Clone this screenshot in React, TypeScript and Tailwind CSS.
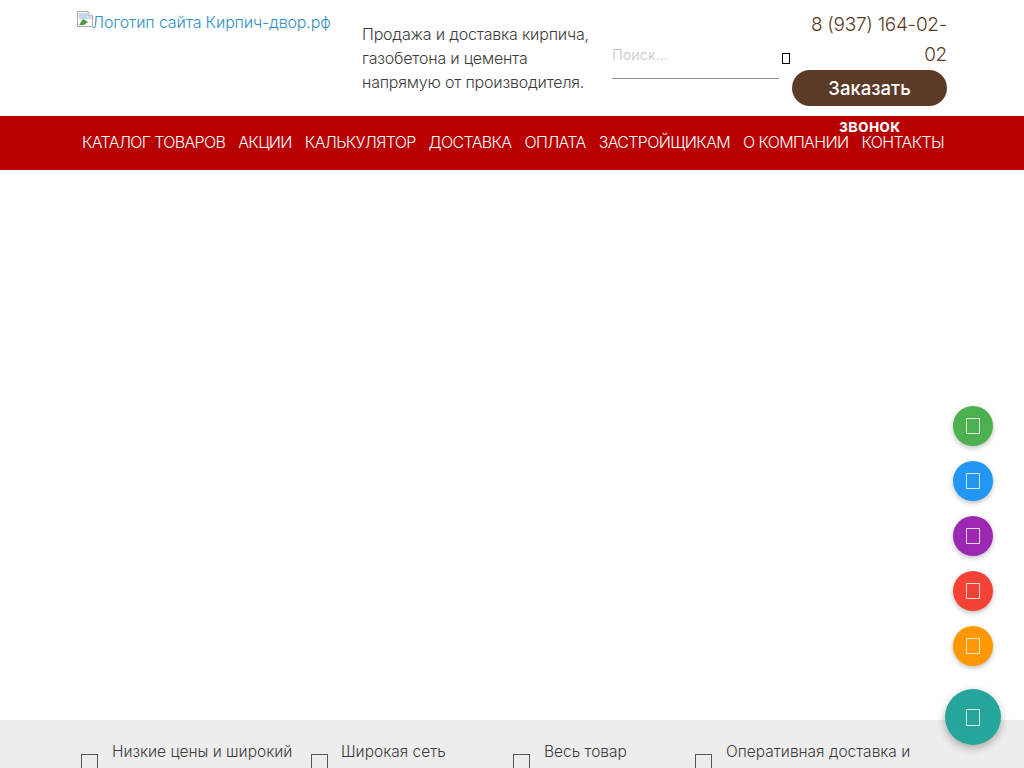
const navItems = ["Каталог товаров", "Акции", "Калькулятор", "Доставка", "Оплата", "Застройщикам", "О компании", "Контакты"];

const benefits = [
  { text: "Низкие цены и широкий", icon: "w-[31px]", col: "w-[230px]" },
  { text: "Широкая сеть", icon: "w-[30px]", col: "w-[202px]" },
  { text: "Весь товар", icon: "w-[31px]", col: "w-[182px]" },
  { text: "Оперативная доставка и", icon: "w-[31px]", col: "w-[220px]" },
];

const fabs = ["bg-[#4caf50]", "bg-[#2196f3]", "bg-[#9c27b0]", "bg-[#f44336]", "bg-[#ff9800]"];

function Tofu({ className }: { className: string }) {
  return <span className={"block border border-current " + className} />;
}

function BrokenImage() {
  return (
    <svg width="16" height="16" viewBox="0 0 16 16" className="shrink-0">
      <path d="M0.5 0.5h10.5l4.5 4.5v10.5H0.5z" fill="#fff" stroke="#a9a9a9" />
      <path d="M11 0.5v4.5h4.5" fill="#eaeaea" stroke="#a9a9a9" />
      <path d="M2 2h8v4l5 1v1H2z" fill="#c3d5f5" />
      <path d="M2 14l4-6 5 3-4 3z" fill="#4f9a3c" />
      <path d="M9 15l6-6" stroke="#fff" strokeWidth="2" />
    </svg>
  );
}

export default function App() {
  return (
    <div className="relative h-[768px] overflow-hidden bg-white font-['Inter','Noto_Sans',sans-serif] text-[#3c3c3c]">
      {/* Header */}
      <header className="flex h-[116px] pl-[77px]">
        <a className="mt-[11px] flex h-[16px] w-[285px] items-start text-[16px] font-light leading-[22px] tracking-[-0.15px] text-[#2f8fc6]">
          <BrokenImage />
          <span className="-ml-[1px] whitespace-nowrap">Логотип сайта Кирпич-двор.рф</span>
        </a>
        <p className="w-[250px] pt-[22px] text-[16px] font-light leading-[24px] tracking-[-0.2px] whitespace-pre-line">
          {"Продажа и доставка кирпича,\nгазобетона и цемента\nнапрямую от производителя."}
        </p>
        <div className="relative w-[180px] pt-[43px]">
          <div className="h-[36px] w-[167px] border-b border-[#8f8f8f] text-[14.5px] font-light leading-[24px] text-[#c4c4c4]">Поиск...</div>
          <Tofu className="absolute left-[170px] top-[53px] h-[11px] w-[8px] text-black" />
        </div>
        <div className="relative z-10 w-[155px] pt-[10px]">
          <div className="text-right text-[19px] font-light leading-[30px] tracking-[-0.3px] text-[#5c3a28]">
            8 (937) 164-02-<br />02
          </div>
          <button className="block h-[36px] w-[155px] rounded-[18px] bg-[#5c3a28] text-center text-[18.5px] font-medium leading-[37px] text-white">
            Заказать
            <span className="block text-[17.5px] font-semibold">звонок</span>
          </button>
        </div>
      </header>

      {/* Nav */}
      <nav className="flex h-[54px] items-center gap-[13px] bg-[#b80000] pb-[2px] pl-[82px] text-[16px] font-light uppercase tracking-[-0.65px] text-white">
        {navItems.map((item) => (
          <a key={item} className="whitespace-nowrap">{item}</a>
        ))}
      </nav>

      <div className="h-[550px]" />

      {/* Benefits */}
      <section className="flex h-[48px] bg-[#ededed] pl-[81px] pt-[20px] text-[15.5px] font-light leading-[24px]">
        {benefits.map((b) => (
          <div key={b.text} className={"flex " + b.col}>
            <div className={"shrink-0 pt-[14px] " + b.icon}>
              <Tofu className="h-[20px] w-[17px] text-[#555]" />
            </div>
            <span className="whitespace-nowrap">{b.text}</span>
          </div>
        ))}
      </section>

      {/* Floating buttons */}
      <div className="fixed right-[23px] top-[689px] flex h-[56px] w-[56px] items-center justify-center rounded-full bg-[#26a69a] shadow-[0_3px_8px_rgba(0,0,0,0.3)]">
        <Tofu className="h-[17px] w-[14px] text-white/80" />
      </div>
      <div className="fixed right-[31px] top-[406px] flex flex-col gap-[15px]">
        {fabs.map((c) => (
          <div key={c} className={"flex h-[40px] w-[40px] items-center justify-center rounded-full shadow-[0_2px_5px_rgba(0,0,0,0.26)] " + c}>
            <Tofu className="h-[16px] w-[14px] text-white/80" />
          </div>
        ))}
      </div>
    </div>
  );
}
